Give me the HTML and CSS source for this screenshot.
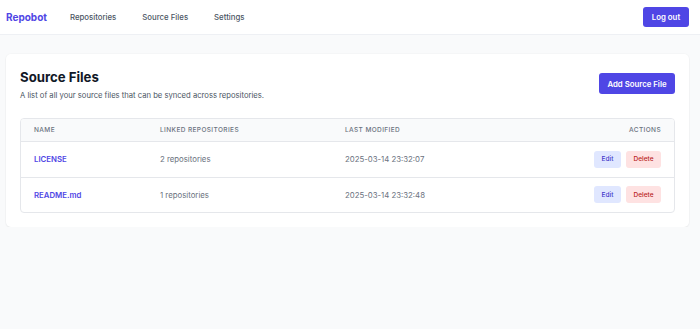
FILE: index.html
```html
<!DOCTYPE html>
<html lang="en">
<head>
  <meta charset="UTF-8" />
  <meta name="viewport" content="width=device-width, initial-scale=1" />
  <title>Repobot - Source Files</title>
  <link rel="stylesheet" href="styles.css">
</head>
<body>
  <nav class="topbar">
    <div class="nav-left">
      <a class="logo" href="#">Repobot</a>
      <a class="nav-link" href="#">Repositories</a>
      <a class="nav-link" href="#">Source Files</a>
      <a class="nav-link" href="#">Settings</a>
    </div>
    <button class="btn btn-primary btn-logout">Log out</button>
  </nav>

  <main class="page">
    <div class="card">
      <div class="card-header">
        <div>
          <h1>Source Files</h1>
          <p class="subtitle">A list of all your source files that can be synced across repositories.</p>
        </div>
        <button class="btn btn-primary btn-add">Add Source File</button>
      </div>

      <div class="table-wrap">
        <table>
          <thead>
            <tr>
              <th class="col-name">Name</th>
              <th class="col-linked">Linked Repositories</th>
              <th class="col-modified">Last Modified</th>
              <th class="col-actions">Actions</th>
            </tr>
          </thead>
          <tbody>
            <tr>
              <td><a class="file-link" href="#">LICENSE</a></td>
              <td>2 repositories</td>
              <td>2025-03-14 23:32:07</td>
              <td class="col-actions">
                <div class="actions">
                  <button class="btn-sm btn-edit">Edit</button>
                  <button class="btn-sm btn-delete">Delete</button>
                </div>
              </td>
            </tr>
            <tr>
              <td><a class="file-link" href="#">README.md</a></td>
              <td>1 repositories</td>
              <td>2025-03-14 23:32:48</td>
              <td class="col-actions">
                <div class="actions">
                  <button class="btn-sm btn-edit">Edit</button>
                  <button class="btn-sm btn-delete">Delete</button>
                </div>
              </td>
            </tr>
          </tbody>
        </table>
      </div>
    </div>
  </main>
</body>
</html>
```

FILE: styles.css
```css
:root {
  --bg: #f9fafb;
  --fg: #111827;
  --accent: #4f46e5;
  --muted: #6b7280;
  --text: #4b5563;
  --border: #e5e7eb;
}

* {
  box-sizing: border-box;
}

body {
  margin: 0;
  font-family: Inter, "Noto Sans", sans-serif;
  background-color: var(--bg);
  color: var(--fg);
}

a {
  text-decoration: none;
}

.topbar {
  height: 35px;
  background: #fff;
  border-bottom: 1px solid #eef0f4;
  display: flex;
  align-items: center;
  justify-content: space-between;
  padding: 0 11px 0 6px;
}

.nav-left {
  display: flex;
  align-items: center;
  gap: 26px;
}

.logo {
  color: var(--accent);
  font-weight: 700;
  font-size: 10px;
  margin-right: -3px;
}

.nav-link {
  color: var(--text);
  font-weight: 500;
  font-size: 7.8px;
}

.btn {
  font-family: inherit;
  border: none;
  cursor: pointer;
}

.btn-primary {
  background: var(--accent);
  color: #fff;
  font-weight: 600;
  font-size: 7.8px;
  border-radius: 3px;
}

.btn-logout {
  width: 46px;
  height: 20px;
  padding: 0;
}

.page {
  padding: 19px 11px 0 6px;
}

.card {
  background: #fff;
  border-radius: 5px;
  box-shadow: 0 1px 2px rgba(0, 0, 0, 0.05), 0 0 0 1px rgba(0, 0, 0, 0.015);
  padding: 14px;
}

.card-header {
  display: flex;
  justify-content: space-between;
  align-items: flex-start;
  margin-bottom: 16px;
}

h1 {
  margin: 0;
  font-size: 13.2px;
  font-weight: 700;
  line-height: 18px;
}

.subtitle {
  margin: 4px 0 0;
  font-size: 7.65px;
  color: var(--text);
  line-height: 12px;
}

.btn-add {
  margin-top: 5px;
  width: 76px;
  height: 21px;
  padding: 0;
}

.table-wrap {
  border: 1px solid var(--border);
  border-radius: 4px;
  overflow: hidden;
}

table {
  width: 100%;
  border-collapse: collapse;
}

th {
  background: var(--bg);
  height: 22px;
  text-align: left;
  font-size: 6.5px;
  font-weight: 500;
  letter-spacing: 0.06em;
  text-transform: uppercase;
  color: var(--muted);
  padding: 0 13px;
  border-bottom: 1px solid var(--border);
}

td {
  height: 36px;
  font-size: 7.8px;
  color: var(--muted);
  padding: 0 13px;
  border-bottom: 1px solid var(--border);
}

tbody tr:last-child td {
  height: 35px;
  border-bottom: none;
}

.col-name {
  width: 126px;
}

.col-linked {
  width: 185px;
}

.col-actions {
  text-align: right;
}

.file-link {
  color: var(--accent);
  font-weight: 600;
}

.actions {
  display: flex;
  justify-content: flex-end;
  gap: 5px;
}

.btn-sm {
  font-family: inherit;
  border: none;
  border-radius: 3px;
  height: 17px;
  font-size: 6.5px;
  font-weight: 500;
  padding: 0;
  cursor: pointer;
}

.btn-edit {
  width: 27px;
  background: #e0e7ff;
  color: #4338ca;
}

.btn-delete {
  width: 35px;
  background: #fee2e2;
  color: #b91c1c;
}
```
